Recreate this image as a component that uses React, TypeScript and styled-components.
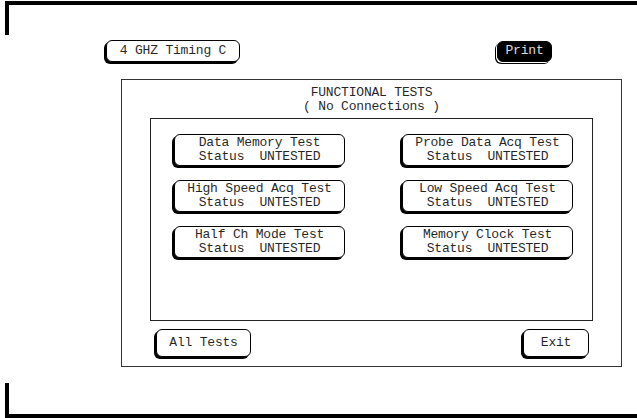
import React from "react";
import styled, { createGlobalStyle } from "styled-components";

const Global = createGlobalStyle`
  html, body { margin: 0; padding: 0; background: #fff; }
  body { font-family: "Liberation Mono", "DejaVu Sans Mono", monospace; color: #000; }
`;

const Screen = styled.div`
  width: 637px;
  height: 418px;
  display: flex;
  flex-direction: column;
  overflow: hidden;
`;

const TopCorner = styled.div`
  margin: 1px 0 0 5px;
  height: 30px;
  border-top: 4px solid #000;
  border-left: 4px solid #000;
`;

const Header = styled.div`
  display: flex;
  align-items: center;
  margin-top: 4px;
  height: 24px;
`;

const Text = styled.span`
  font-size: 13px;
  letter-spacing: -0.2px;
  line-height: 14px;
  white-space: pre;
  color: inherit;
  opacity: 0.85;
`;

const RoundButton = styled.div<{ $w: number; $h: number; $ml?: number; $dark?: boolean }>`
  box-sizing: border-box;
  width: ${(p) => p.$w}px;
  height: ${(p) => p.$h}px;
  margin-left: ${(p) => p.$ml ?? 0}px;
  border: 1px solid #000;
  border-radius: 6px;
  background: ${(p) => (p.$dark ? "#000" : "#fff")};
  color: ${(p) => (p.$dark ? "#fff" : "#000")};
  box-shadow: ${(p) =>
    p.$dark ? "-1px 1px 0 0 #fff, -2px 2px 0 0 #000" : "-2px 2px 0 0 #000"};
  display: flex;
  flex-direction: column;
  align-items: center;
  justify-content: center;
  flex-shrink: 0;
`;

const Panel = styled.div`
  box-sizing: border-box;
  margin: 16px 0 0 121px;
  width: 501px;
  height: 288px;
  border: 1px solid #333;
  display: flex;
  flex-direction: column;
  align-items: center;
`;

const Title = styled.div`
  display: flex;
  flex-direction: column;
  align-items: center;
  padding-top: 6px;
  height: 32px;
`;

const Inner = styled.div`
  box-sizing: border-box;
  width: 443px;
  height: 203px;
  border: 1px solid #222;
  display: grid;
  grid-template-columns: 171px 171px;
  grid-auto-rows: 32px;
  column-gap: 57px;
  row-gap: 14px;
  padding: 15px 0 0 23px;
  align-content: start;
`;

const Footer = styled.div`
  display: flex;
  justify-content: space-between;
  width: 100%;
  box-sizing: border-box;
  padding: 8px 32px 0 34px;
`;

const BottomCorner = styled.div`
  margin: 16px 0 0 5px;
  height: 31px;
  border-left: 4px solid #000;
  border-bottom: 4px solid #000;
`;

const tests = [
  "Data Memory Test",
  "Probe Data Acq Test",
  "High Speed Acq Test",
  "Low Speed Acq Test",
  "Half Ch Mode Test",
  "Memory Clock Test",
];

export default function App() {
  return (
    <>
      <Global />
      <Screen>
        <TopCorner />
        <Header>
          <RoundButton $w={134} $h={22} $ml={106}>
            <Text>4 GHZ Timing C</Text>
          </RoundButton>
          <RoundButton $w={55} $h={21} $ml={257} $dark>
            <Text>Print</Text>
          </RoundButton>
        </Header>
        <Panel>
          <Title>
            <Text>FUNCTIONAL TESTS</Text>
            <Text>( No Connections )</Text>
          </Title>
          <Inner>
            {tests.map((t) => (
              <RoundButton key={t} $w={171} $h={32}>
                <Text>{t}</Text>
                <Text>{"Status  UNTESTED"}</Text>
              </RoundButton>
            ))}
          </Inner>
          <Footer>
            <RoundButton $w={95} $h={28}>
              <Text>All Tests</Text>
            </RoundButton>
            <RoundButton $w={66} $h={28}>
              <Text>Exit</Text>
            </RoundButton>
          </Footer>
        </Panel>
        <BottomCorner />
      </Screen>
    </>
  );
}
